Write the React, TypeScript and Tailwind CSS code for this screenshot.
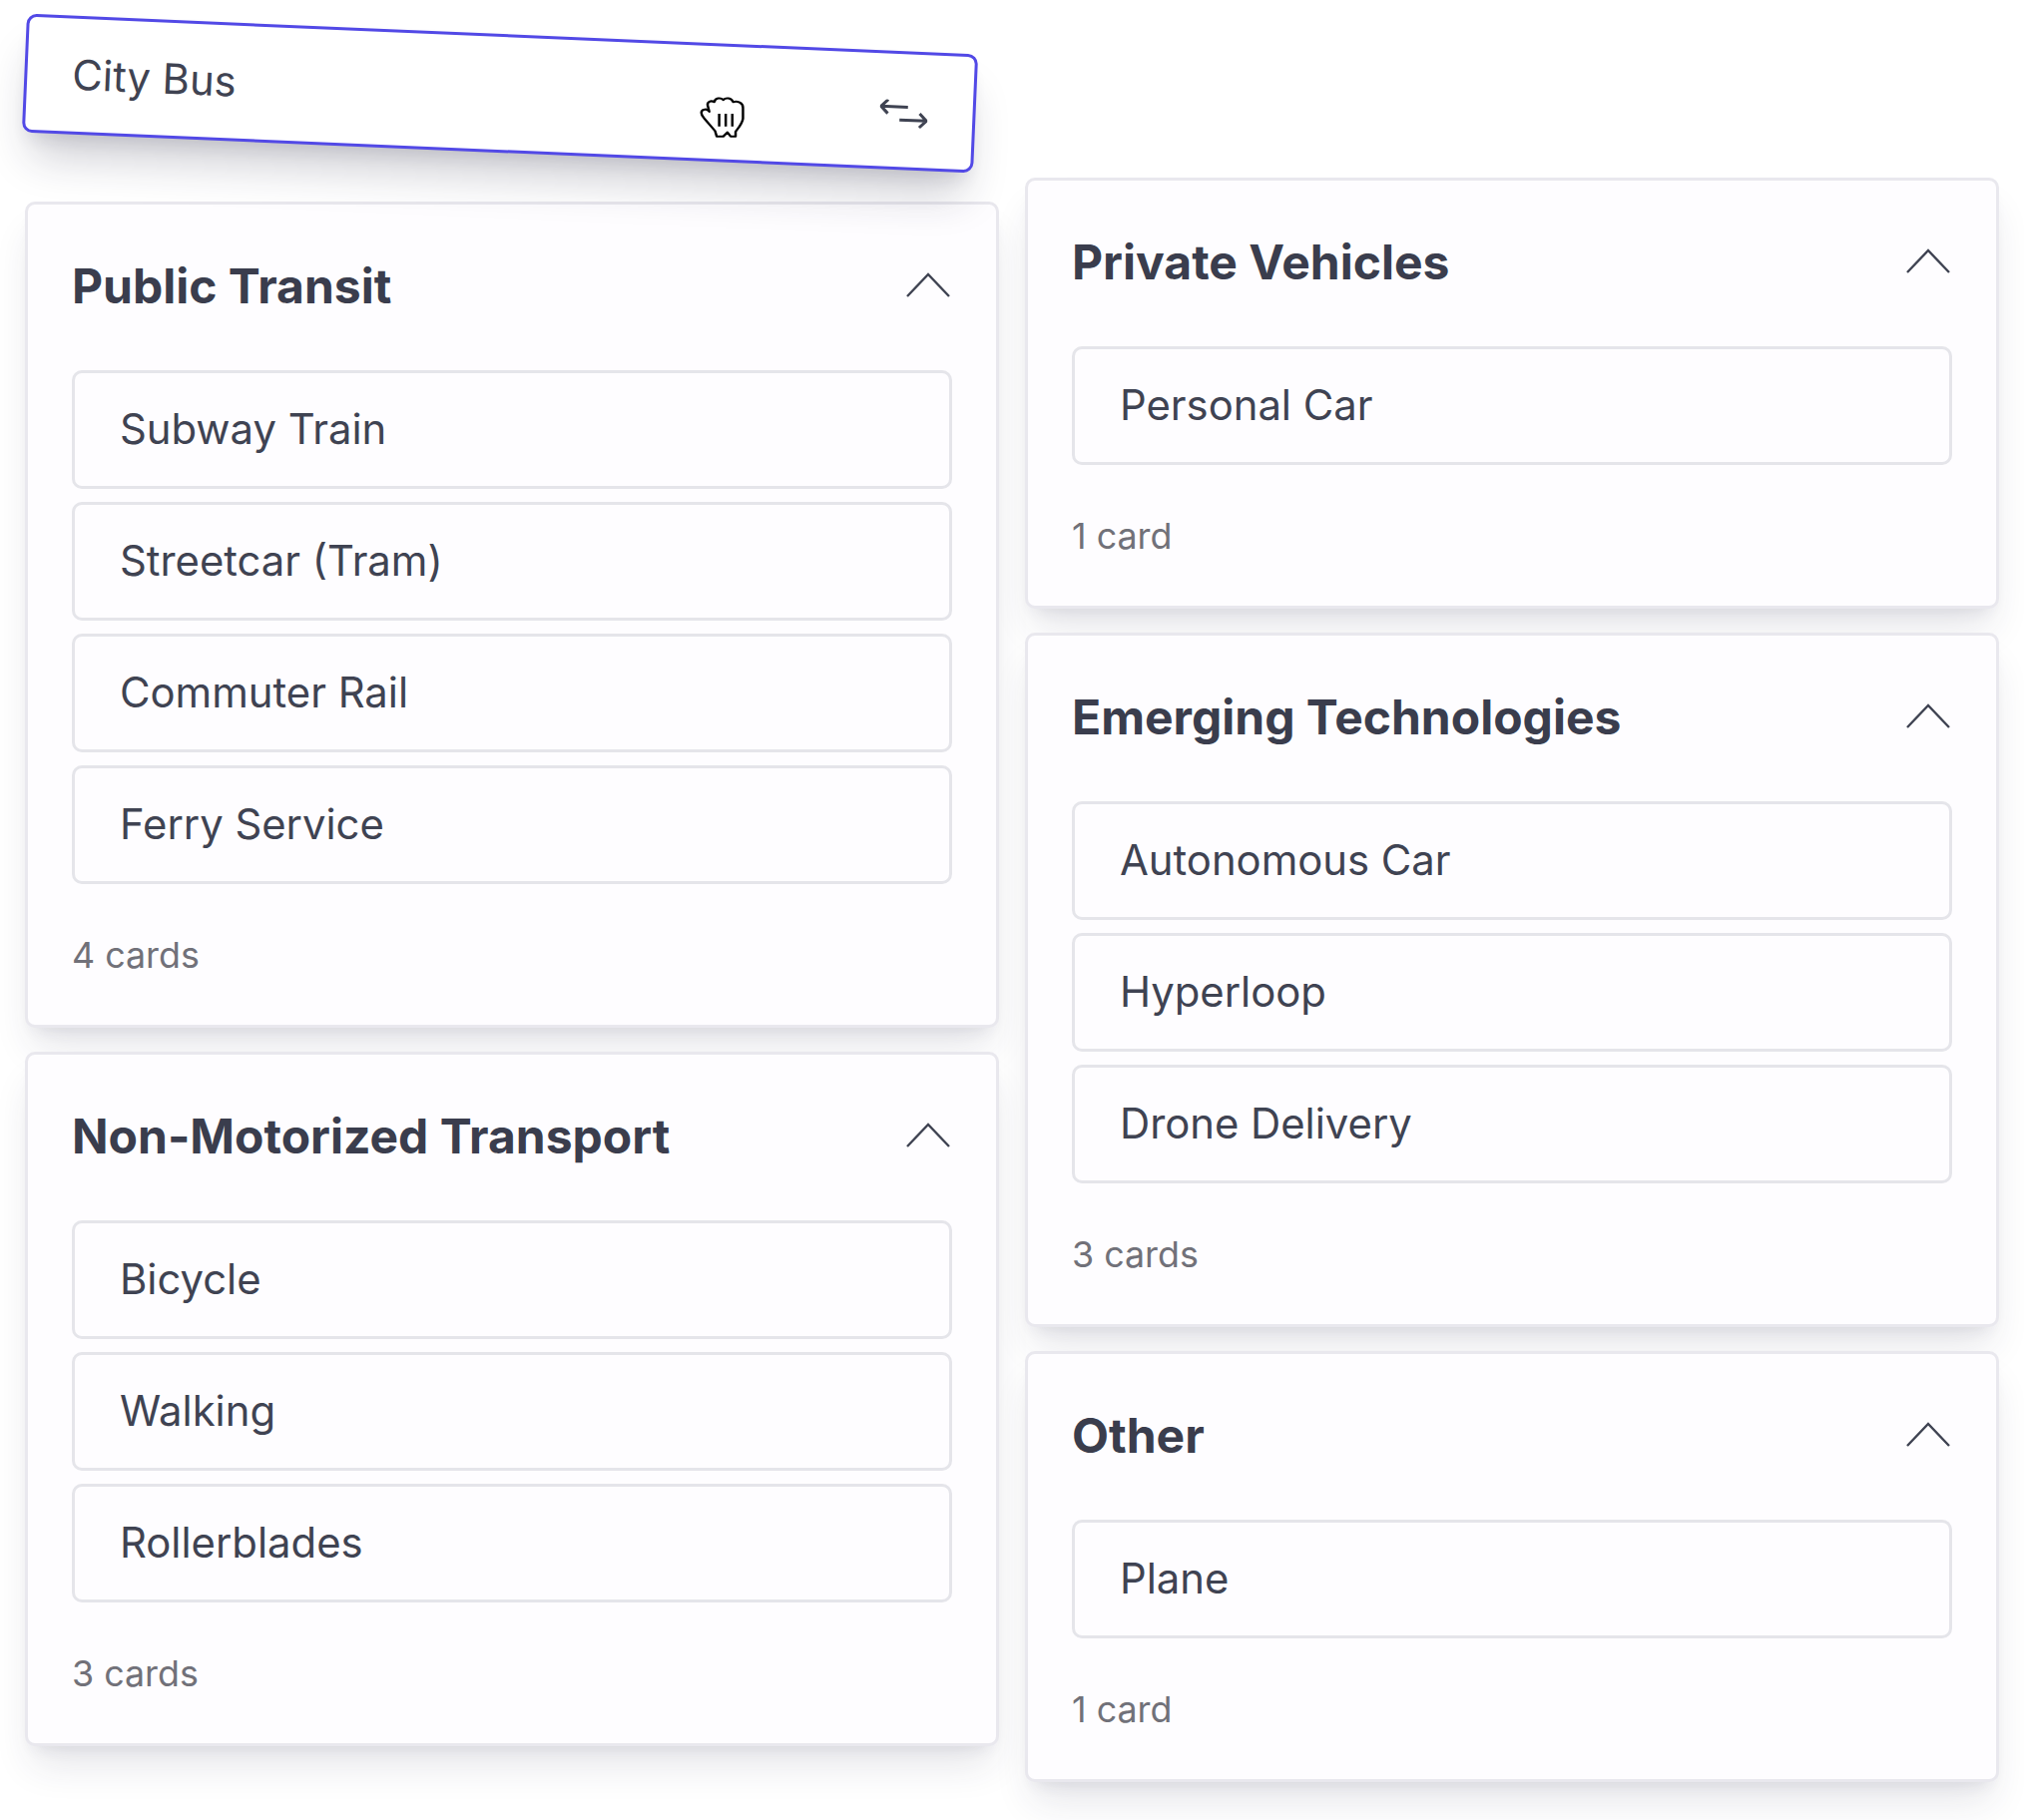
import React from 'react';

interface Group {
    title: string;
    items: string[];
}

const leftGroups: Group[] = [
    { title: 'Public Transit', items: ['Subway Train', 'Streetcar (Tram)', 'Commuter Rail', 'Ferry Service'] },
    { title: 'Non-Motorized Transport', items: ['Bicycle', 'Walking', 'Rollerblades'] },
];

const rightGroups: Group[] = [
    { title: 'Private Vehicles', items: ['Personal Car'] },
    { title: 'Emerging Technologies', items: ['Autonomous Car', 'Hyperloop', 'Drone Delivery'] },
    { title: 'Other', items: ['Plane'] },
];

const ChevronUp = () => (
    <svg width="46" height="26" viewBox="0 0 46 26" fill="none" className="-mt-[2px] mr-[1px] shrink-0">
        <polyline points="2,24 23,2 44,24" stroke="#3f4352" strokeWidth="2.4" />
    </svg>
);

const GroupCard: React.FC<{ group: Group }> = ({ group }) => {
    const count = group.items.length;
    return (
        <div className="rounded-[10px] border-[3px] border-[#e9e8ee] bg-[#fefdff] p-[44px] shadow-[0_26px_39px_-8px_rgba(40,40,70,0.12),0_10px_16px_-10px_rgba(40,40,70,0.12)]">
            <div className="mb-[46px] flex h-[76px] items-center justify-between">
                <h3 className="text-[48px] font-bold text-[#3a3d4d]">{group.title}</h3>
                <ChevronUp />
            </div>
            <div className="flex flex-col gap-[13px]">
                {group.items.map((item) => (
                    <div
                        key={item}
                        className="flex h-[119px] items-center rounded-[10px] border-[3px] border-[#e5e5ea] bg-[#fefdff] px-[45px] text-[41.8px] text-[#3f4352]"
                    >
                        {item}
                    </div>
                ))}
            </div>
            <div className="mt-[47px] flex h-[50px] items-center text-[35.8px] text-[#717179]">
                {count} {count === 1 ? 'card' : 'cards'}
            </div>
        </div>
    );
};

export default function App() {
    return (
        <div className="relative h-[1824px] w-[2028px] overflow-hidden bg-white font-['Inter',sans-serif]">
            <div className="flex gap-[26px] pl-[25px]">
                <div className="flex w-[976px] flex-col gap-[24px] pt-[202px]">
                    {leftGroups.map((g) => (
                        <GroupCard key={g.title} group={g} />
                    ))}
                </div>
                <div className="flex w-[976px] flex-col gap-[24px] pt-[178px]">
                    {rightGroups.map((g) => (
                        <GroupCard key={g.title} group={g} />
                    ))}
                </div>
            </div>

            {/* Card being dragged */}
            <div className="absolute left-[24px] top-[34px] flex h-[119px] w-[954px] rotate-[2.45deg] items-center justify-between rounded-[10px] border-[3px] border-[#5249e6] bg-white pl-[45px] pr-[45px] text-[41.8px] text-[#3f4352] shadow-[0_32px_44px_-10px_rgba(30,30,60,0.22),0_12px_18px_-8px_rgba(30,30,60,0.12)]">
                <span className="-mt-[1px]">City Bus</span>
                <svg width="48" height="28" viewBox="0 0 48 28" fill="none" className="mt-[7px]">
                    <path d="M28 7H1M8 0L1 7L8 14M20 20H47M40 13L47 20L40 27" stroke="#3f4352" strokeWidth="3" />
                </svg>
            </div>

            {/* Grab cursor */}
            <svg width="74" height="56" viewBox="0 0 180 162" preserveAspectRatio="none" className="absolute left-[691px] top-[87px]" fill="#fff" stroke="#000" strokeWidth="6" strokeLinejoin="round">
                <path d="M62 128L36 92C26 80 26 68 36 66C42 64 46 68 48 72L44 54C42 44 52 38 60 44C62 32 76 30 82 38C88 30 102 32 106 44C116 40 130 46 130 60L130 92C128 108 118 120 112 130L112 144L100 144L92 132L82 144L66 144Z" />
                <path d="M72 78V115M88 78V115M104 78V115" fill="none" />
            </svg>
        </div>
    );
}
